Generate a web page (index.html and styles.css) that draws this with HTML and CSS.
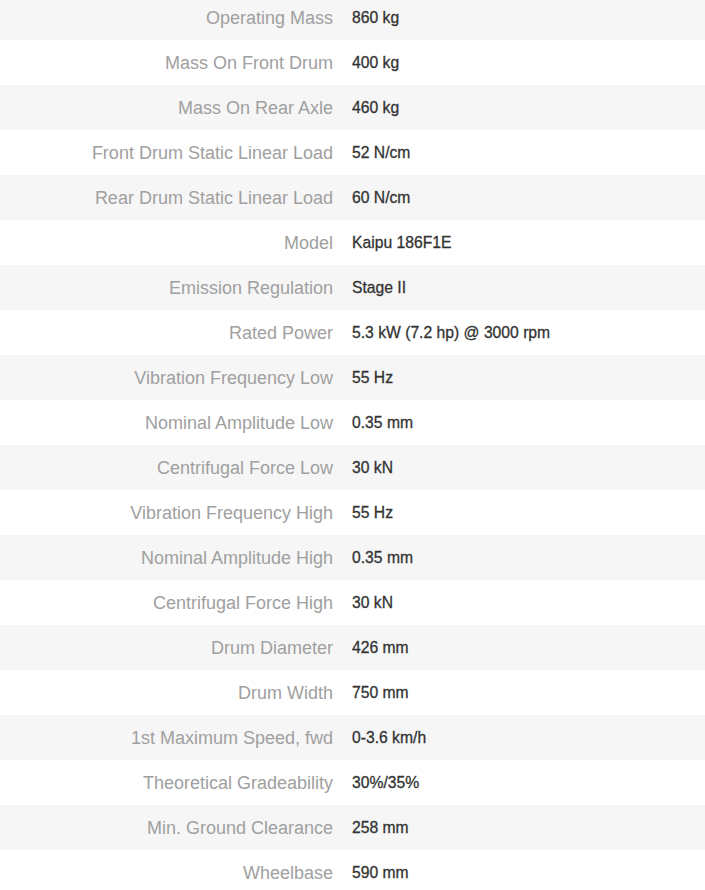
FILE: index.html
```html
<!DOCTYPE html>
<html>
<head>
<meta charset="utf-8">
<link rel="stylesheet" href="styles.css">
</head>
<body>
<div class="specs">
  <div class="row"><div class="label">Operating Mass</div><div class="value">860 kg</div></div>
  <div class="row"><div class="label">Mass On Front Drum</div><div class="value">400 kg</div></div>
  <div class="row"><div class="label">Mass On Rear Axle</div><div class="value">460 kg</div></div>
  <div class="row"><div class="label">Front Drum Static Linear Load</div><div class="value">52 N/cm</div></div>
  <div class="row"><div class="label">Rear Drum Static Linear Load</div><div class="value">60 N/cm</div></div>
  <div class="row"><div class="label">Model</div><div class="value">Kaipu 186F1E</div></div>
  <div class="row"><div class="label">Emission Regulation</div><div class="value">Stage II</div></div>
  <div class="row"><div class="label">Rated Power</div><div class="value">5.3 kW (7.2 hp) @ 3000 rpm</div></div>
  <div class="row"><div class="label">Vibration Frequency Low</div><div class="value">55 Hz</div></div>
  <div class="row"><div class="label">Nominal Amplitude Low</div><div class="value">0.35 mm</div></div>
  <div class="row"><div class="label">Centrifugal Force Low</div><div class="value">30 kN</div></div>
  <div class="row"><div class="label">Vibration Frequency High</div><div class="value">55 Hz</div></div>
  <div class="row"><div class="label">Nominal Amplitude High</div><div class="value">0.35 mm</div></div>
  <div class="row"><div class="label">Centrifugal Force High</div><div class="value">30 kN</div></div>
  <div class="row"><div class="label">Drum Diameter</div><div class="value">426 mm</div></div>
  <div class="row"><div class="label">Drum Width</div><div class="value">750 mm</div></div>
  <div class="row"><div class="label">1st Maximum Speed, fwd</div><div class="value">0-3.6 km/h</div></div>
  <div class="row"><div class="label">Theoretical Gradeability</div><div class="value">30%/35%</div></div>
  <div class="row"><div class="label">Min. Ground Clearance</div><div class="value">258 mm</div></div>
  <div class="row"><div class="label">Wheelbase</div><div class="value">590 mm</div></div>
</div>
</body>
</html>
```
FILE: styles.css
```css
html, body {
  margin: 0;
  padding: 0;
  background: #ffffff;
  font-family: "Liberation Sans", Arial, sans-serif;
}
.specs {
  margin-top: -5px;
}
.row {
  display: grid;
  grid-template-columns: 333px 1fr;
  column-gap: 19px;
  align-items: center;
  height: 45px;
  padding-top: 1px;
  box-sizing: border-box;
}
.row:nth-child(odd) {
  background: #f6f6f6;
}
.label {
  text-align: right;
  color: #a0a0a0;
  font-size: 18px;
}
.value {
  color: #333333;
  font-size: 15.7px;
  -webkit-text-stroke: 0.3px #333333;
}
```
